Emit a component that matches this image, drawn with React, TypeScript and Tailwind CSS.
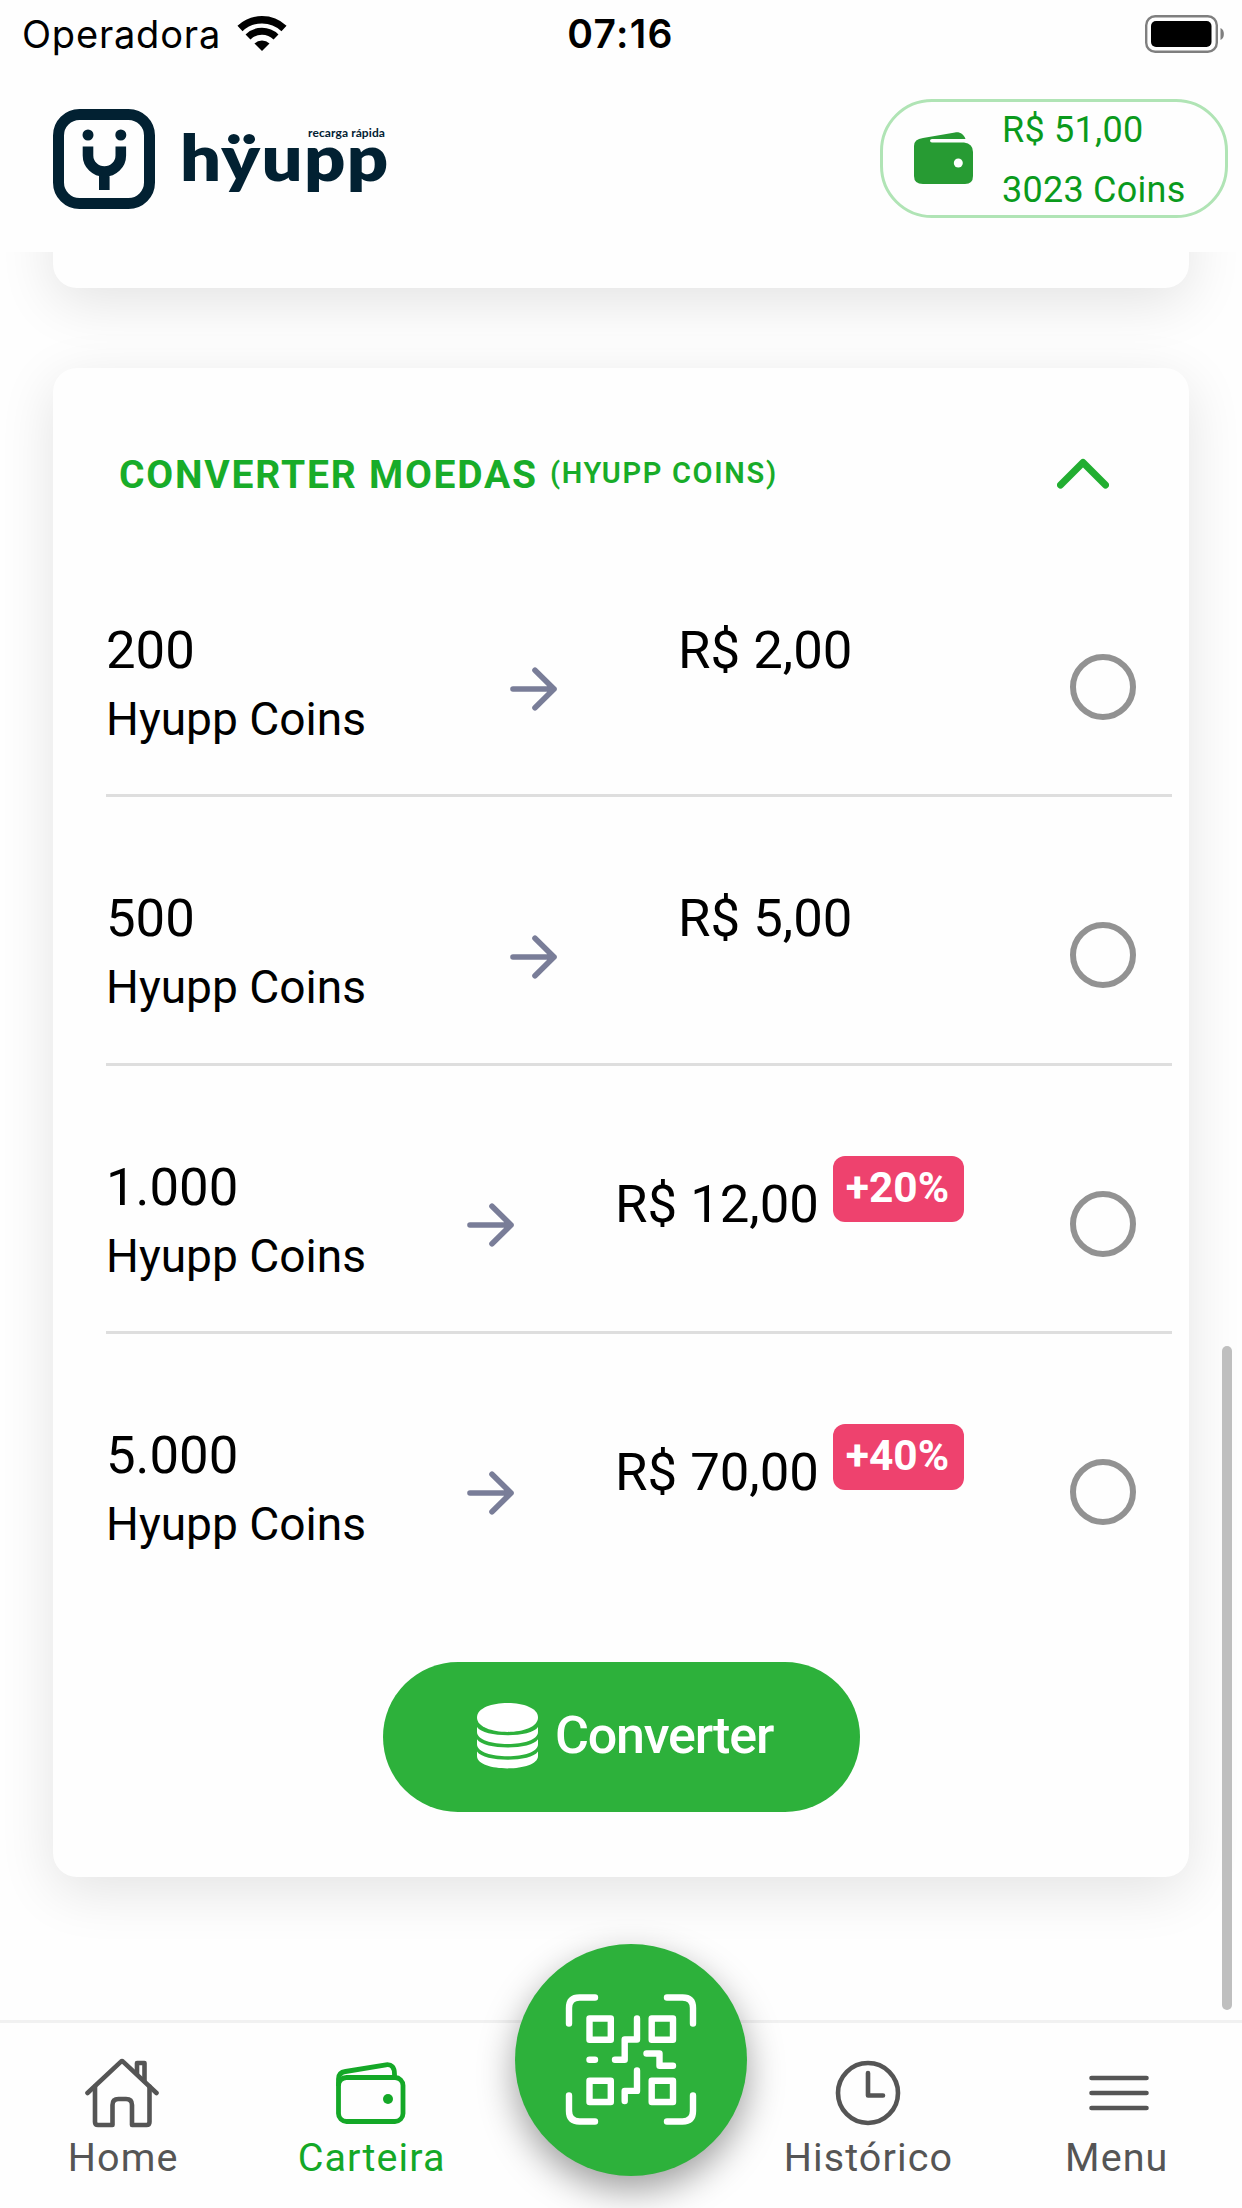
import { clsx } from 'clsx';

interface Offer {
  coins: string;
  price: string;
  bonus?: string;
}

const offers: Offer[] = [
  { coins: '200', price: 'R$ 2,00' },
  { coins: '500', price: 'R$ 5,00' },
  { coins: '1.000', price: 'R$ 12,00', bonus: '+20%' },
  { coins: '5.000', price: 'R$ 70,00', bonus: '+40%' },
];

const WifiIcon = () => (
  <svg className="w-[50px] h-[37px]" viewBox="0 0 50 37" fill="none" stroke="#000">
    <path d="M3 13.5a32 32 0 0 1 44 0" strokeWidth="7.4" />
    <path d="M11 22a20 20 0 0 1 28 0" strokeWidth="7" />
    <path d="M25 36l-7.5-7.6a11 11 0 0 1 15 0z" fill="#000" stroke="none" />
  </svg>
);

const BatteryIcon = () => (
  <svg className="w-20 h-[38px]" viewBox="0 0 80 38" fill="none">
    <rect x="1.2" y="1.2" width="70.6" height="35.6" rx="9" stroke="#7f7f7f" strokeWidth="2.4" />
    <rect x="6" y="6" width="60.5" height="26" rx="5" fill="#000" />
    <path d="M75.500 13c4.500 1.500 4.500 10.500 0 12z" fill="#7f7f7f" />
  </svg>
);

const LogoMark = () => (
  <svg className="w-[102px] h-[100px]" viewBox="0 0 102 100" fill="none" stroke="#022132">
    <rect x="5.500" y="5.500" width="91" height="89" rx="21" strokeWidth="11" />
    <path d="M35 37.500v9a16.400 16 0 0 0 32.800 0v-9M51.300 62v19" strokeWidth="10.600" />
    <circle cx="35" cy="26" r="5.500" fill="#022132" stroke="none" />
    <circle cx="67.800" cy="26" r="5.500" fill="#022132" stroke="none" />
  </svg>
);

const WalletSolid = () => (
  <svg className="w-[59px] h-[53px]" viewBox="0 0 59 53">
    <path
      d="M9 6L41 .5c5-.8 8.500 1.500 10.500 6.500H18q-2 0-2 1.700t2 1.700h32q9 1 9 9.600v24q0 8-8 8H9q-9 0-9-8V14Q0 7 9 6z"
      fill="#279b33"
    />
    <circle cx="44.300" cy="31" r="4.500" fill="#fff" />
  </svg>
);

const ArrowIcon = () => (
  <svg className="w-[47px] h-11" viewBox="0 0 47 44" fill="none" stroke="#797d98" strokeWidth="5.600" strokeLinecap="round" strokeLinejoin="round">
    <path d="M3 22h41M25 3.200L44 22L25 40.800" />
  </svg>
);

const CoinsIcon = () => (
  <svg className="w-[61px] h-[66px]" viewBox="0 0 61 66" fill="#fff">
    <path d="M0 14.500C0-4.700 61-4.700 61 14.500S0 33.700 0 14.500z" />
    <path d="M0 24c7 11 54 11 61 0v5c0 16-61 16-61 0z" />
    <path d="M0 36.300c7 11 54 11 61 0v5c0 16-61 16-61 0z" />
    <path d="M0 48.600c7 11 54 11 61 0v4.400c0 16.500-61 16.500-61 0z" />
  </svg>
);

const HomeIcon = () => (
  <svg className="-ml-1 w-[74px] h-[70px]" viewBox="0 0 74 70" fill="none" stroke="#555" strokeWidth="4.600" strokeLinecap="round" strokeLinejoin="round">
    <path d="M2.500 35L36 3.600q1-1 2 0L71.500 35" />
    <path d="M10 28.500V64q0 3 3 3h14.500V47q0-6 6-6h7.500q6 0 6 6v20h14.500q3 0 3-3V28.500" />
    <path d="M52 16V5h7.500v18" />
  </svg>
);

const WalletIcon = () => (
  <svg className="-ml-1 w-[70px] h-[62px]" viewBox="0 0 70 62" fill="none" stroke="#14a827" strokeWidth="4.800">
    <rect x="2.500" y="15.500" width="64.500" height="44" rx="8" />
    <path d="M2.500 24V17q0-6.500 7-7.500L50 2.800q8.500-1 8.500 9.500v2.500" />
    <circle cx="52" cy="37" r="5" fill="#14a827" stroke="none" />
  </svg>
);

const ClockIcon = () => (
  <svg className="-ml-[3px] w-[66px] h-[66px]" viewBox="0 0 66 66" fill="none" stroke="#555" strokeWidth="4.600" strokeLinecap="round" strokeLinejoin="round">
    <circle cx="33" cy="33" r="30" />
    <path d="M33 13v22.500h15" />
  </svg>
);

const MenuIcon = () => (
  <svg className="ml-0.5 w-[60px] h-9" viewBox="0 0 60 36" fill="none" stroke="#555" strokeWidth="4.600" strokeLinecap="round">
    <path d="M2.500 3h55M2.500 18h55M2.500 33h55" />
  </svg>
);

const QrIcon = () => (
  <svg className="w-[132px] h-[132px]" viewBox="0 0 132 132" fill="none" stroke="#fff" strokeWidth="6.400" strokeLinecap="round" strokeLinejoin="round">
    <path d="M4 29.500V14Q4 3.500 14.500 3.500H30M102 3.500h15.500Q128 3.500 128 14v15.500M128 101.500V117q0 10.500-10.500 10.500H102M30 127.500H14.500Q4 127.500 4 117v-15.500" />
    <path d="M24.500 24.500h21.300v21.300H24.500zM86.700 24.500H108v21.300H86.700zM24.500 86.700h21.300V108H24.500zM86.700 86.700H108V108H86.700z" />
    <path d="M24.500 65.700h5.500M72 24.500v21H59.700v20.200H50M81.500 59.500h13v12.300H108M72 76.500v20.400H59.700V107" />
  </svg>
);

const OfferRow = ({ coins, price, bonus, last }: Offer & { last: boolean }) => (
  <div
    className={clsx(
      'flex h-[268.3px] ml-[53px] mr-[17px] border-b-[3px]',
      last ? 'border-transparent' : 'border-[#dedede]',
    )}
  >
    <div className={clsx('pt-[86px] text-black', bonus ? 'w-[361px]' : 'w-[404px]')}>
      <p className="text-[52.7px] leading-[70px]">{coins}</p>
      <p className="text-[46.1px] leading-[68px]">Hyupp Coins</p>
    </div>
    <div className={clsx('pt-[137.5px]', bonus ? 'w-[148px]' : 'w-[168px]')}>
      <ArrowIcon />
    </div>
    <div className={clsx('flex flex-1 items-start', bonus ? 'pt-[90px]' : 'pt-[86px]')}>
      <span
        className={clsx(
          'text-[52.7px] text-black whitespace-nowrap',
          bonus ? 'leading-[96px]' : 'leading-[70px]',
        )}
      >
        {price}
      </span>
      {bonus && (
        <span className="ml-3.5 h-[66px] w-[131px] rounded-xl bg-[#ee426e] pr-0.5 text-center text-[42.5px] font-bold leading-[64px] text-white">
          {bonus}
        </span>
      )}
    </div>
    <div className="mt-[125px] mr-[36px] size-[66px] rounded-full border-[6px] border-[#929292]" />
  </div>
);

const tabs = [
  { label: 'Home', icon: HomeIcon },
  { label: 'Carteira', icon: WalletIcon, active: true },
  null,
  { label: 'Histórico', icon: ClockIcon },
  { label: 'Menu', icon: MenuIcon },
];

export default function App() {
  return (
    <div className="relative flex h-[2208px] w-[1242px] flex-col overflow-hidden bg-[#fefefe] font-[Roboto,sans-serif]">
      <header className="z-10 h-[252px] shrink-0 bg-[#fefefe]">
        <div className="grid h-[67px] grid-cols-3 items-center pl-[22px] pr-[17px] font-[Inter,sans-serif] text-[38px] text-black">
          <div className="flex items-center gap-4">
            <span className="pt-0.5 tracking-[0.8px]">Operadora</span>
            <WifiIcon />
          </div>
          <span className="-ml-1.5 pt-0.5 text-center text-[39px] font-semibold tracking-[1.3px]">07:16</span>
          <div className="flex justify-end">
            <BatteryIcon />
          </div>
        </div>

        <div className="flex items-start justify-between pl-[53px] pr-3.5 pt-8">
          <div className="flex pt-2.5">
            <LogoMark />
            <div className="relative ml-[25px] font-[Lato,sans-serif] font-bold text-[#022132]">
              <span className="block origin-left scale-x-[1.11] pt-0.5 text-[65px] leading-[90px] font-extrabold tracking-[1.2px]">
                hÿupp
              </span>
              <span className="absolute left-[128px] top-[16px] whitespace-nowrap text-[12px] leading-4 tracking-[0.1px]">
                recarga rápida
              </span>
            </div>
          </div>
          <div className="flex h-[119px] w-[348px] items-center rounded-[52px] border-[3px] border-[#b0e4b5] pl-[31px]">
            <WalletSolid />
            <div className="ml-[29px] pt-0.5 text-[36px] leading-[60px] tracking-[0.25px] text-[#0a9a1c]">
              <p>R$ 51,00</p>
              <p>3023 Coins</p>
            </div>
          </div>
        </div>
      </header>

      <main className="flex-1 px-[53px]">
        <div className="-mt-16 h-[100px] rounded-3xl bg-[#fefefe] shadow-[0_14px_56px_rgba(0,0,0,0.11)]" />

        <section className="mt-20 h-[1509px] rounded-3xl bg-[#fefefe] shadow-[0_14px_56px_rgba(0,0,0,0.11)]">
          <div className="flex h-[161px] items-start justify-between pl-[66px] pr-20 pt-20">
            <h2 className="flex text-[#18ac29]">
              <span className="text-[39px] font-bold leading-[54px] tracking-[1.8px]">CONVERTER MOEDAS</span>
              <span className="ml-3 text-[29px] font-semibold leading-[50px] tracking-[1.7px]">(HYUPP COINS)</span>
            </h2>
            <svg className="mt-[10px] w-[52px] h-[31px]" viewBox="0 0 52 31" fill="none" stroke="#22ae31" strokeWidth="7" strokeLinecap="round" strokeLinejoin="round">
              <path d="M3.500 27L26 4.500L48.500 27" />
            </svg>
          </div>

          {offers.map((o, i) => (
            <OfferRow key={o.coins} {...o} last={i === offers.length - 1} />
          ))}

          <button className="mx-auto mt-[60px] flex h-[150px] w-[477px] items-center justify-center gap-[17px] rounded-full bg-[#2db13b] pb-0.5 pl-2 text-[52px] font-medium tracking-[-1.2px] text-white">
            <CoinsIcon />
            Converter
          </button>
        </section>
      </main>

      <nav className="z-10 grid h-[188px] shrink-0 grid-cols-5 border-t-[3px] border-[#f1f1f1] bg-[#fefefe]">
        {tabs.map((tab) => {
          if (!tab) {
            return (
              <div key="qr" className="flex justify-center">
                <div className="ml-5 -mt-[79px] flex size-[232px] shrink-0 items-center justify-center rounded-full bg-[#2db13b] shadow-[0_14px_36px_rgba(0,0,0,0.38)]">
                  <QrIcon />
                </div>
              </div>
            );
          }
          const Icon = tab.icon;
          return (
            <div
              key={tab.label}
              className={clsx('flex flex-col items-center', tab.active ? 'text-[#14a827]' : 'text-[#555]')}
            >
              <div className="mt-[34px] flex h-[72px] items-center">
                <Icon />
              </div>
              <span className="-ml-0.5 mt-0.5 text-[39.5px] leading-[54px] tracking-[1.1px]">{tab.label}</span>
            </div>
          );
        })}
      </nav>

      {/* scroll indicator */}
      <div className="absolute right-[10px] top-[1346px] h-[664px] w-[10px] rounded-full bg-[#bfbfbf]" />
    </div>
  );
}
